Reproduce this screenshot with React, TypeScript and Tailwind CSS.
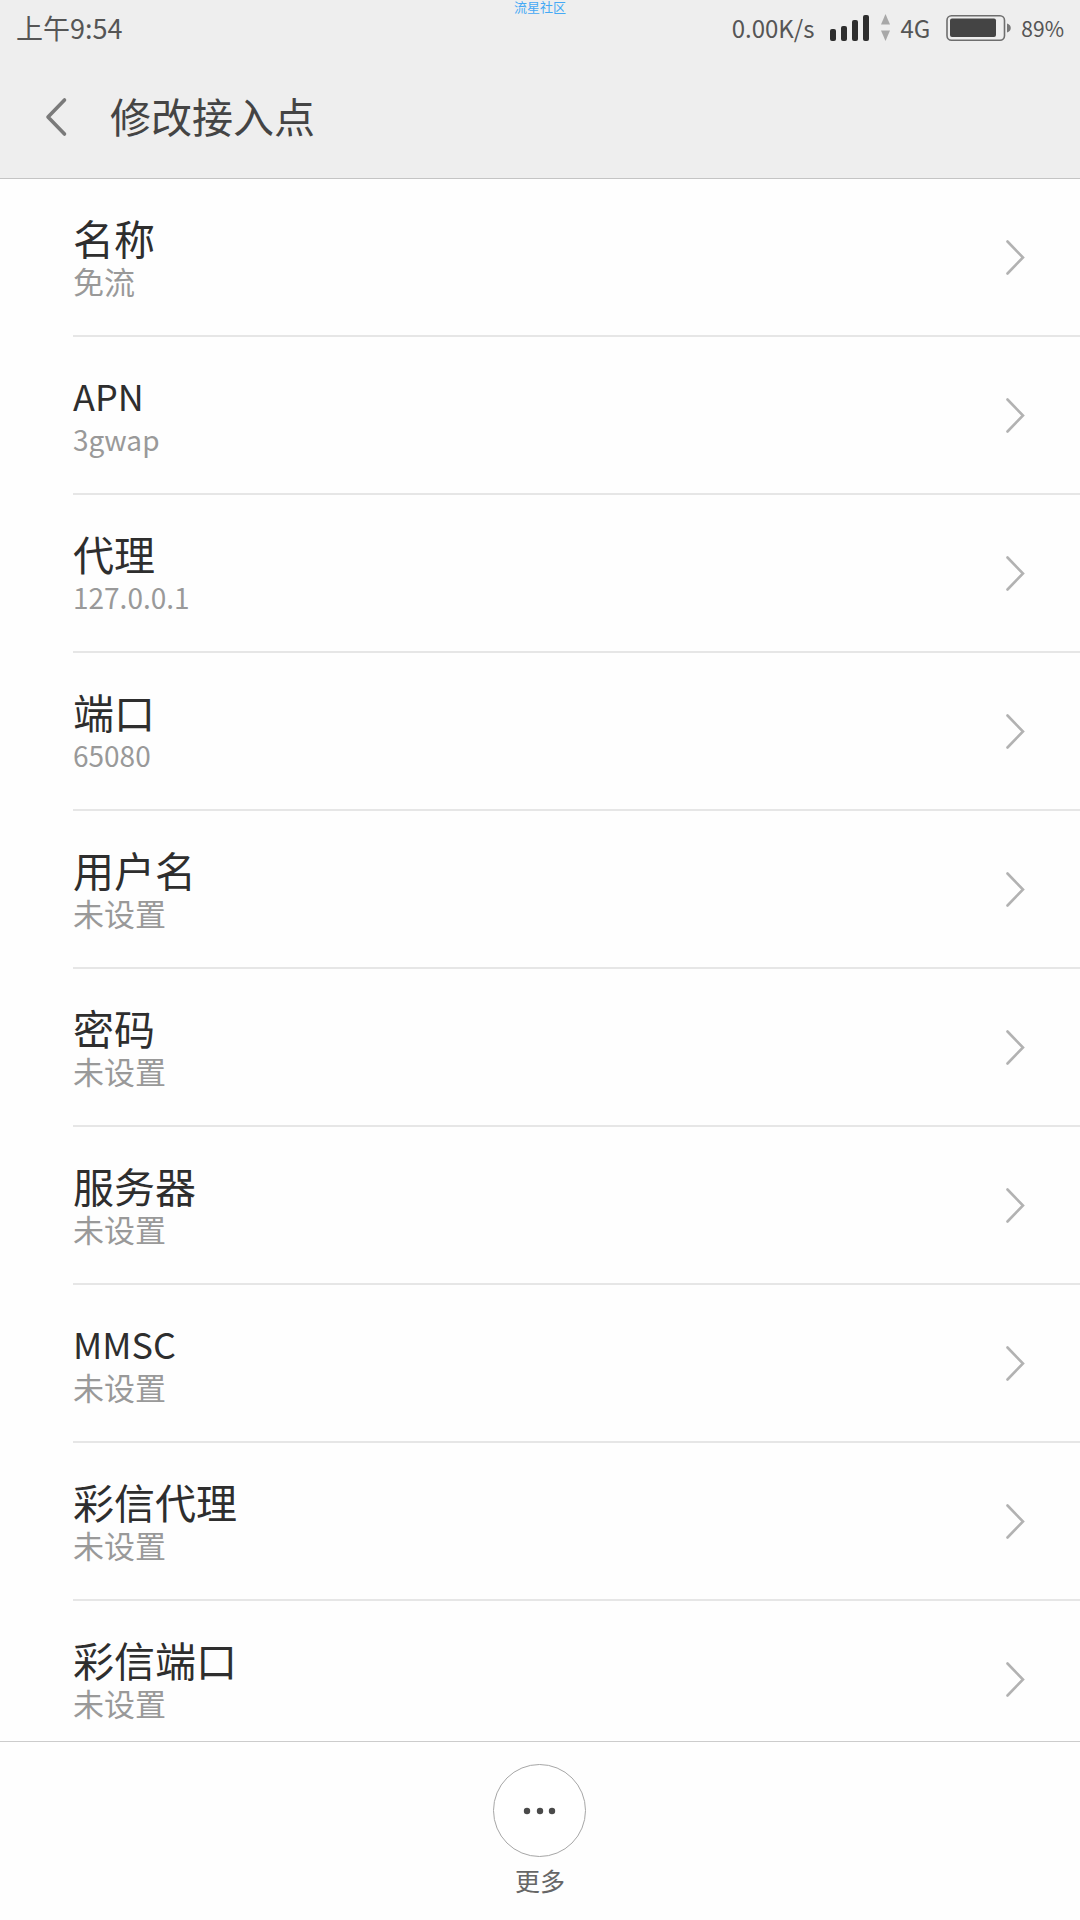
type Row = { label: string; value: string };

const rows: Row[] = [
  { label: '名称', value: '免流' },
  { label: 'APN', value: '3gwap' },
  { label: '代理', value: '127.0.0.1' },
  { label: '端口', value: '65080' },
  { label: '用户名', value: '未设置' },
  { label: '密码', value: '未设置' },
  { label: '服务器', value: '未设置' },
  { label: 'MMSC', value: '未设置' },
  { label: '彩信代理', value: '未设置' },
  { label: '彩信端口', value: '未设置' },
];

const isLatin = (text: string) => /^[\x20-\x7e]+$/.test(text);

function SignalIcon() {
  return (
    <svg width="39" height="28" viewBox="0 0 39 28" fill="#2e2e2e" aria-hidden="true">
      <rect x="0" y="15" width="6" height="12" rx="2" />
      <rect x="11" y="12" width="6" height="15" rx="2" />
      <rect x="22" y="6" width="6" height="21" rx="2" />
      <rect x="33" y="1" width="6" height="26" rx="2" />
    </svg>
  );
}

function DataArrows() {
  return (
    <svg width="9" height="28" viewBox="0 0 9 28" fill="#a8a8a8" aria-hidden="true">
      <path d="M4.5 0 9 10.5H0z" />
      <path d="M4.5 27 0 16.500h9z" />
    </svg>
  );
}

function BatteryIcon() {
  return (
    <svg width="65" height="28" viewBox="0 0 65 28" aria-hidden="true">
      <rect x="1" y="1.7" width="57.5" height="24.6" rx="4.5" fill="none" stroke="#6e6e6e" strokeWidth="1.6" />
      <rect x="4" y="4.6" width="46" height="18.4" rx="2" fill="#444" />
      <path d="M61 9.5c5 1.5 5 7.500 0 9z" fill="#777" />
    </svg>
  );
}

function StatusBar() {
  return (
    <div className="flex h-14 items-center justify-between px-4 text-[#555]">
      <span className="text-[27px] leading-8">上午9:54</span>
      <div className="flex items-center text-[24px] leading-8">
        <span>0.00K/s</span>
        <span className="ml-4 flex items-center gap-3">
          <SignalIcon />
          <DataArrows />
        </span>
        <span className="ml-2.5">4G</span>
        <span className="ml-4">
          <BatteryIcon />
        </span>
        <span className="ml-2.5 text-[21px]">89%</span>
      </div>
    </div>
  );
}

function ListRow({ label, value }: Row) {
  return (
    <li className="pl-[73px]">
      <button
        type="button"
        className="flex h-[158px] w-full items-center justify-between border-b-2 border-[#e6e6e6] pr-[55px] text-left"
      >
        <span className="flex flex-col pb-0.5">
          <span className={isLatin(label) ? 'text-[36px] leading-[50px] text-[#2e2e2e]' : 'text-[41px] leading-[50px] text-[#2e2e2e]'}>
            {label}
          </span>
          <span className={isLatin(value) ? 'text-[28px] leading-[38px] text-[#999]' : 'text-[31px] leading-[38px] text-[#999]'}>
            {value}
          </span>
        </span>
        <svg width="20" height="36" viewBox="0 0 20 36" fill="none" stroke="#b2b2b2" strokeWidth="2.6" strokeLinecap="round" aria-hidden="true">
          <path d="M2.500 2.500 18 18.500 2.500 34.500" />
        </svg>
      </button>
    </li>
  );
}

export default function App() {
  return (
    <div
      lang="zh-CN"
      className="relative flex h-screen flex-col overflow-hidden bg-[#fefefe] font-['Noto_Sans_CJK_SC',sans-serif]"
    >
      <div className="absolute inset-x-0 top-0 text-center text-[13px] leading-[13px] text-[#45a9f5]">流星社区</div>

      <header className="shrink-0 border-b border-[#c4c4c4] bg-[#eee]">
        <StatusBar />
        <div className="flex h-[122px] items-center pl-[44px]">
          <button type="button" aria-label="返回" className="mr-[42px]">
            <svg width="24" height="40" viewBox="0 0 24 40" fill="none" stroke="#7a7a7a" strokeWidth="3.600" strokeLinecap="round" strokeLinejoin="round" aria-hidden="true">
              <path d="M20.500 3 4 20l16.500 17" />
            </svg>
          </button>
          <h1 className="pb-1 text-[41px] leading-[48px] text-[#444]">修改接入点</h1>
        </div>
      </header>

      <main className="min-h-0 flex-1 overflow-y-auto [scrollbar-width:none]">
        <ul>
          {rows.map((row) => (
            <ListRow key={row.label} {...row} />
          ))}
        </ul>
      </main>

      <footer className="flex h-[179px] shrink-0 justify-center border-t border-[#ccc] pt-[22px]">
        <button type="button" className="flex flex-col items-center gap-1.5 text-[25px] leading-8 text-[#666]">
          <svg width="94" height="94" viewBox="0 0 94 94" aria-hidden="true">
            <circle cx="46.500" cy="46.500" r="46" fill="#fff" stroke="#a6a6a6" strokeWidth="1" />
            <g fill="#4a4a4a">
              <circle cx="34" cy="47" r="3.200" />
              <circle cx="47" cy="47" r="3.200" />
              <circle cx="59" cy="47" r="3.200" />
            </g>
          </svg>
          更多
        </button>
      </footer>
    </div>
  );
}
